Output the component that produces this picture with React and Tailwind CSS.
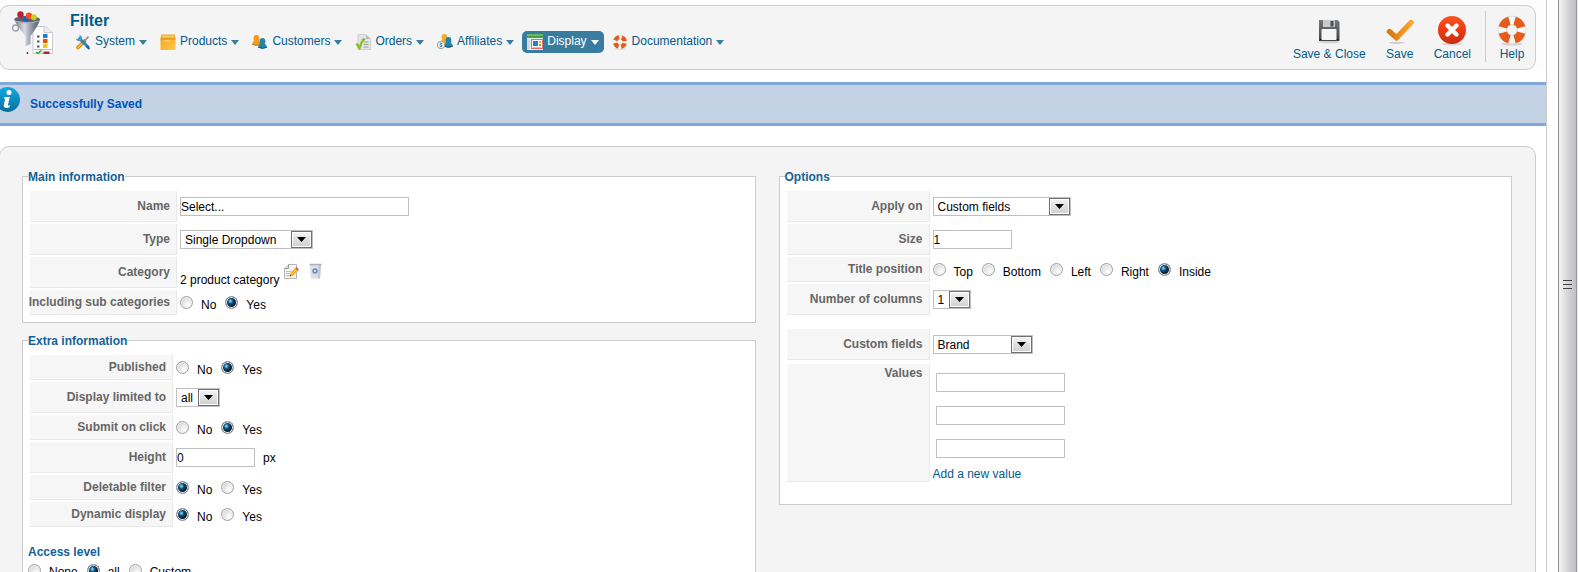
import React, { useId } from "react";

/* ---------- icons ---------- */

function FunnelIcon() {
  return (
    <svg width="42" height="43" viewBox="0 0 42 43" aria-hidden="true">
      <defs>
        <linearGradient id="funnel" x1="0" x2="1">
          <stop offset="0" stopColor="#6f7180" />
          <stop offset=".4" stopColor="#d9dbe4" />
          <stop offset=".7" stopColor="#8e91a0" />
          <stop offset="1" stopColor="#4e505e" />
        </linearGradient>
      </defs>
      <path d="M21 18.500L24 15.500H33.500L40.500 21.500V42.500H21Z" fill="#fff" stroke="#c9c9cf" />
      <path d="M32 15.500V21.500H40.500" fill="#ececf0" stroke="#c9c9cf" />
      <path d="M25 25.500h2.500M25 30.500h2.500M25 35.500h2.500" stroke="#555" strokeWidth="2" />
      <rect x="31" y="23" width="4.500" height="4" fill="#1a7fd0" />
      <rect x="31" y="28" width="4.500" height="4" fill="#f04a12" />
      <rect x="31" y="33" width="4.500" height="4" fill="#e6cf1b" />
      <path d="M22 38.500h8v4M30 38.500h10" stroke="#b9b9c0" fill="none" />
      <path d="M24 41l2 1.500 3-3" stroke="#3ba32e" strokeWidth="1.500" fill="none" />
      <rect x="31.500" y="40.500" width="6" height="2.500" fill="#b3202a" />
      <circle cx="3.500" cy="17" r="3" fill="none" stroke="#9a9ba8" strokeWidth="1.300" />
      <path d="M2 8Q15 3 28 8Q27 14 18.500 25V33L13.500 35.500V25Q4 14 2 8Z" fill="url(#funnel)" />
      <ellipse cx="15" cy="8" rx="12.500" ry="3" fill="#5d5f6e" />
      <circle cx="8.500" cy="3.500" r="3.200" fill="#b5222f" />
      <circle cx="14" cy="8" r="3" fill="#1b63b8" />
      <circle cx="17" cy="4.800" r="3.200" fill="#f4511e" />
      <circle cx="21.800" cy="6.200" r="3" fill="#c8cf1a" />
      <path d="M3 10Q15 14 27 10" stroke="#a9acb8" fill="none" />
      <path d="M15.500 41v2" stroke="#b3202a" strokeWidth="1.500" />
    </svg>
  );
}

function ToolsIcon() {
  return (
    <svg width="16" height="16" viewBox="0 0 16 16" aria-hidden="true">
      <path d="M3 13.500L9.500 7" stroke="#d9861a" strokeWidth="3.600" strokeLinecap="round" />
      <path d="M3 13.500L8.500 8" stroke="#f9bd45" strokeWidth="1.600" strokeLinecap="round" />
      <path d="M9.500 7L13.500 2.500" stroke="#8f9499" strokeWidth="1.800" />
      <path d="M4.500 4.500L13 13" stroke="#2b84b8" strokeWidth="3" strokeLinecap="round" />
      <path d="M1 4.500Q1.500 7.500 5 7.200L7.200 5Q7.500 1.800 4.300 1L4.800 3.800 3.600 4.900Z" fill="#4c9ecb" />
      <path d="M11.500 12L14.500 15" stroke="#1c638f" strokeWidth="2" />
    </svg>
  );
}

function BoxIcon() {
  return (
    <svg width="16" height="16" viewBox="0 0 16 16" aria-hidden="true">
      <defs>
        <linearGradient id="box" x1="0" y1="0" x2="1" y2="1">
          <stop offset="0" stopColor="#f7a41d" />
          <stop offset="1" stopColor="#fcca4d" />
        </linearGradient>
      </defs>
      <path d="M1.500 .5h13.500l.500 4.500H.5Z" fill="#eaa41e" />
      <path d="M2.500 1.500h12v2h-12.500Z" fill="#f8cf66" />
      <rect x=".5" y="4.500" width="15" height="11.500" fill="url(#box)" />
      <path d="M.5 5h15" stroke="#e0960f" />
      <rect x="4" y="6" width="6" height="1.500" fill="#fbd27a" />
    </svg>
  );
}

function Person({ x, y, color, dark }) {
  return (
    <g transform={`translate(${x} ${y})`}>
      <ellipse cx="4.500" cy="3.400" rx="2.900" ry="3.400" fill={color} />
      <path d="M0 9.500Q.2 6.500 3 5.200h3Q8.900 6.500 9 9.500Q4.500 11.800 0 9.500Z" fill={color} />
      <path d="M.2 9.200Q4.500 11.400 8.900 9.200" stroke={dark} fill="none" />
    </g>
  );
}

function CustomersIcon() {
  return (
    <svg width="16" height="16" viewBox="0 0 16 16" aria-hidden="true">
      <Person x="0" y="1" color="#f39a21" dark="#cf7310" />
      <Person x="6" y="4" color="#2583a8" dark="#14566f" />
    </svg>
  );
}

function OrdersIcon() {
  return (
    <svg width="16" height="16" viewBox="0 0 16 16" aria-hidden="true">
      <path d="M3 .5h8L15.500 5v10.500H3Z" fill="#e4e5e6" stroke="#cfd0d2" />
      <path d="M11 .5L15.500 5H11Z" fill="#b9bbbd" />
      <path d="M6.500 5.500h4M8.500 8h5M8.500 10.500h5M8.500 13h5" stroke="#9fa1a3" />
      <path d="M1.500 9.500L4.500 14Q6 8 9.500 4.500" stroke="#8cbf26" strokeWidth="2.400" fill="none" />
    </svg>
  );
}

function AffiliatesIcon() {
  return (
    <svg width="16" height="16" viewBox="0 0 16 16" aria-hidden="true">
      <Person x="3" y="0" color="#f5ac25" dark="#cf8310" />
      <Person x="7" y="3" color="#2583a8" dark="#14566f" />
      <circle cx="4" cy="11" r="3.700" fill="#f0f4f6" stroke="#8ba6b1" />
      <path d="M5.200 9.500Q3 8.600 3 10Q3 11 4.200 11Q5.400 11.200 5 12.300Q4 13.200 2.700 12.300" stroke="#42606c" strokeWidth=".9" fill="none" />
    </svg>
  );
}

function DisplayIcon() {
  return (
    <svg width="16" height="16" viewBox="0 0 16 16" aria-hidden="true">
      <rect width="16" height="16" fill="#e9f1f3" />
      <rect width="16" height="4" fill="#45a048" />
      <path d="M0 1h16" stroke="#8ad08b" />
      <rect x="0" y="5" width="3" height="10" fill="#cfdbe0" />
      <rect x="4.500" y="5.500" width="11" height="9" fill="#fff" stroke="#e06a67" />
      <rect x="6" y="7" width="5" height="5" fill="#1f86b5" />
      <rect x="12" y="7" width="2" height="2" fill="#f0a93b" />
      <rect x="12" y="10" width="2" height="2" fill="#79b643" />
      <path d="M6 13.500h8" stroke="#e6b3b1" />
    </svg>
  );
}

function LifebuoyIcon({ size }) {
  return (
    <svg width={size} height={size} viewBox="0 0 32 32" aria-hidden="true">
      <ellipse cx="16" cy="30" rx="11" ry="1.600" fill="#d6d6d6" />
      <circle cx="16" cy="16" r="9.600" fill="none" stroke="#d3d3d3" strokeWidth="9.400" />
      <circle cx="16" cy="16" r="9.600" fill="none" stroke="#f9f9f9" strokeWidth="8" />
      <circle
        cx="16"
        cy="16"
        r="9.600"
        fill="none"
        stroke="#e65b1c"
        strokeWidth="8.400"
        pathLength="80"
        strokeDasharray="13 7"
        strokeDashoffset="-3.500"
      />
    </svg>
  );
}

function FloppyIcon() {
  return (
    <svg width="32" height="32" viewBox="0 0 32 32" aria-hidden="true">
      <defs>
        <linearGradient id="floppy" x1="0" y1="0" x2="0" y2="1">
          <stop offset="0" stopColor="#77787a" />
          <stop offset="1" stopColor="#414244" />
        </linearGradient>
      </defs>
      <ellipse cx="16" cy="28" rx="11" ry="1.300" fill="#d2d2d2" />
      <path d="M6 6h18.500L26.500 8v19H6Z" fill="url(#floppy)" />
      <rect x="10" y="6" width="12" height="7" fill="#c9cacc" />
      <rect x="17.500" y="7" width="3" height="5.500" fill="#4c4d50" />
      <rect x="8.500" y="15" width="15" height="11" rx="1" fill="#f5f5f6" />
      <path d="M7 25.500h1M24.500 25.500h1" stroke="#111" />
    </svg>
  );
}

function CheckIcon() {
  return (
    <svg width="32" height="32" viewBox="0 0 32 32" aria-hidden="true">
      <defs>
        <linearGradient id="check" x1="0" x2="1">
          <stop offset="0" stopColor="#d87a10" />
          <stop offset="1" stopColor="#fba62f" />
        </linearGradient>
      </defs>
      <ellipse cx="13" cy="28.800" rx="8" ry="1.100" fill="#cfcfcf" />
      <path d="M5.500 17.500L12.500 23.800L27 8.500" fill="none" stroke="url(#check)" strokeWidth="5.400" strokeLinecap="round" strokeLinejoin="round" />
    </svg>
  );
}

function CancelIcon() {
  return (
    <svg width="32" height="32" viewBox="0 0 32 32" aria-hidden="true">
      <defs>
        <linearGradient id="cancel" x1="0" y1="0" x2="0" y2="1">
          <stop offset="0" stopColor="#fb5423" />
          <stop offset=".5" stopColor="#ee3a12" />
          <stop offset="1" stopColor="#c42f12" />
        </linearGradient>
      </defs>
      <ellipse cx="16" cy="30" rx="11" ry="1.400" fill="#d6d6d6" />
      <circle cx="16" cy="16" r="14" fill="url(#cancel)" />
      <path d="M11.500 11.500l9 9M20.500 11.500l-9 9" stroke="#fff" strokeWidth="4.400" strokeLinecap="round" />
    </svg>
  );
}

function InfoIcon() {
  return (
    <svg width="25" height="25" viewBox="0 0 25 25" aria-hidden="true">
      <defs>
        <linearGradient id="info" x1="0" y1="0" x2="0" y2="1">
          <stop offset="0" stopColor="#12a9e6" />
          <stop offset="1" stopColor="#066f9c" />
        </linearGradient>
      </defs>
      <circle cx="12.500" cy="12.500" r="12.500" fill="url(#info)" />
      <circle cx="14" cy="5.500" r="2.500" fill="#fff" />
      <path d="M9.500 10h5.300l-2 8.500h2.200l-.4 1.800q-5.600 1.600-6-1.200l1.600-7.300H9Z" fill="#fff" />
    </svg>
  );
}

function EditIcon() {
  return (
    <svg width="16" height="16" viewBox="0 0 16 16" aria-hidden="true">
      <path d="M1.500 5.500L5.500 1.500H13.500V15.500H1.500Z" fill="#f5f5f5" stroke="#b4b4b4" />
      <path d="M1.500 5.500H5.500V1.500" fill="#ddd" stroke="#9c9c9c" />
      <path d="M3 8.500h6M3 10.500h4M3 12.500h3" stroke="#b9c0c6" />
      <path d="M6.500 13.500L7.500 10L12.500 5L15.300 7.600L10 12.700Z" fill="#f9a91d" />
      <path d="M8.500 11.500L13.500 6.500" stroke="#fdd768" />
      <path d="M12.200 5.200L13.500 4L16 6.500L14.800 7.800Z" fill="#e35247" />
      <path d="M6.500 13.500l.5-1.700 1.300 1.200Z" fill="#333" />
    </svg>
  );
}

function TrashIcon() {
  return (
    <svg width="16" height="16" viewBox="0 0 16 16" aria-hidden="true">
      <path d="M3 2h11l-1 13.500H4Z" fill="#dcdee2" />
      <path d="M11.500 2h2.500l-1 13.500H11Z" fill="#c3c5cb" />
      <path d="M2.500 1.500h12" stroke="#b0b2b8" strokeWidth="1.500" />
      <circle cx="8" cy="8" r="1.900" fill="none" stroke="#5f86d0" strokeWidth="1.500" />
    </svg>
  );
}

function Caret() {
  return (
    <svg width="8" height="5" viewBox="0 0 8 5" className="fill-current" aria-hidden="true">
      <path d="M0 0H8L4 5Z" />
    </svg>
  );
}

/* ---------- form parts ---------- */

function TextBox({ className, ...props }) {
  return <input type="text" className={`h-[19px] border border-[#c0c0c0] bg-white text-black ${className}`} {...props} />;
}

function DropDown({ id, options, className }) {
  return (
    <span className={`relative inline-flex h-[19px] border border-[#c0c0c0] bg-white ${className}`}>
      <select id={id} className="w-full appearance-none bg-transparent pl-1 pr-[22px] leading-4 text-black">
        {options.map((o) => (
          <option key={o}>{o}</option>
        ))}
      </select>
      <span className="pointer-events-none absolute inset-y-0 right-0 flex w-[21px] items-center justify-center border border-[#707070] bg-linear-to-b from-[#f4f4f4] to-[#cfcfcf] text-black shadow-[inset_0_0_0_1px_#fff]">
        <svg width="9" height="5" viewBox="0 0 9 5" aria-hidden="true">
          <path d="M0 0H9L4.500 5Z" />
        </svg>
      </span>
    </span>
  );
}

function Radios({ name, options, value, labelledBy }) {
  return (
    <div role="radiogroup" aria-labelledby={labelledBy} className="flex gap-[9px]">
      {options.map((o) => (
        <label key={o} className="flex items-center gap-2 text-black">
          <input
            type="radio"
            name={name}
            defaultChecked={o === value}
            className="size-[13px] appearance-none rounded-full border border-[#a0a0a0] bg-radial-[at_65%_70%] from-white to-[#c4c8cc] shadow-[inset_0_0_0_1px_#f4f4f4] checked:border-[#858b91] checked:bg-radial-[at_40%_38%] checked:from-[#7fd0f0] checked:from-5% checked:via-[#12557f] checked:via-25% checked:to-[#04182b] checked:to-55% checked:shadow-[inset_0_0_0_1px_#e8ebed]"
          />
          <span className="mt-1">{o}</span>
        </label>
      ))}
    </div>
  );
}

function RadioRow({ label, labelWidth, ...rest }) {
  const id = useId();
  return (
    <div className="flex gap-[3px]">
      <span id={id} className={`${cell} ${labelWidth} min-h-[25px] items-center`}>
        {label}
      </span>
      <div className="flex items-center">
        <Radios labelledBy={id} name={label} {...rest} />
      </div>
    </div>
  );
}

const cell =
  "flex shrink-0 justify-end border-r border-b border-[#e9e9e9] bg-[#f6f6f6] pr-1.5 font-bold text-[#666] whitespace-nowrap";

function Row({ label, labelWidth, htmlFor, children }) {
  return (
    <div className="flex gap-[3px]">
      <label htmlFor={htmlFor} className={`${cell} ${labelWidth} min-h-[31px] items-center`}>
        {label}
      </label>
      <div className="flex items-center">{children}</div>
    </div>
  );
}

function Panel({ title, className, children }) {
  return (
    <fieldset className={`min-w-0 border border-[#ccc] bg-white px-[5px] pt-1.5 ${className}`}>
      <legend className="h-[18px] pt-0.5 font-bold leading-4 text-[#146295]">{title}</legend>
      {children}
    </fieldset>
  );
}

/* ---------- page ---------- */

const menu = [
  { label: "System", icon: <ToolsIcon /> },
  { label: "Products", icon: <BoxIcon /> },
  { label: "Customers", icon: <CustomersIcon /> },
  { label: "Orders", icon: <OrdersIcon /> },
  { label: "Affiliates", icon: <AffiliatesIcon /> },
  { label: "Display", icon: <DisplayIcon />, active: true },
  { label: "Documentation", icon: <LifebuoyIcon size={16} /> },
];

function ToolButton({ icon, label }) {
  return (
    <button type="button" className="flex min-w-8 flex-col items-center whitespace-nowrap leading-4">
      {icon}
      {label}
    </button>
  );
}

function Header() {
  return (
    <header className="bg-[#fcfcfc] pt-[5px] pr-[10px]">
      <div className="-ml-px flex min-h-[65px] justify-between rounded-[10px] border border-[#ccc] bg-[#f4f4f4] pr-[7px] pl-3 text-[#025a8d]">
        <div className="flex gap-4 pt-[5px]">
          <FunnelIcon />
          <div>
            <h1 className="text-base leading-5 font-bold">Filter</h1>
            <nav className="flex gap-[3px]">
              {menu.map((m) => (
                <a
                  key={m.label}
                  href="#"
                  className={`flex h-[22px] items-center gap-1 rounded-[5px] px-[5px] whitespace-nowrap ${m.active ? "bg-[#387c9f] text-white" : ""}`}
                >
                  {m.icon}
                  <span className="pb-0.5">{m.label}</span>
                  <span className={m.active ? "text-white" : "text-[#387c9f]"}>
                    <Caret />
                  </span>
                </a>
              ))}
            </nav>
          </div>
        </div>
        <div className="flex pt-[5px] pb-[7px]">
          <div className="flex items-start gap-[18px] border-r border-[#ccc] pt-[3px] pr-[14px]">
            <ToolButton icon={<FloppyIcon />} label="Save & Close" />
            <ToolButton icon={<CheckIcon />} label="Save" />
            <ToolButton icon={<CancelIcon />} label="Cancel" />
          </div>
          <div className="pt-[3px] pl-[10px]">
            <ToolButton icon={<LifebuoyIcon size={32} />} label="Help" />
          </div>
        </div>
      </div>
    </header>
  );
}

function Message() {
  return (
    <div role="status" className="mt-3 flex min-h-11 items-start gap-[10px] border-y-[3px] border-[#84a7db] bg-[#c3d2e5] font-bold text-[#05b]">
      <span className="-ml-[5px] pt-0.5">
        <InfoIcon />
      </span>
      <span className="pt-[11px] leading-4">Successfully Saved</span>
    </div>
  );
}

function MainInformation() {
  const w = "w-[147px]";
  return (
    <Panel title="Main information" className="pb-[7px]">
      <div className="ml-0.5 flex flex-col gap-0.5">
        <Row label="Name" labelWidth={w} htmlFor="name">
          <TextBox id="name" defaultValue="Select..." className="w-[229px]" />
        </Row>
        <Row label="Type" labelWidth={w} htmlFor="type">
          <DropDown id="type" options={["Single Dropdown"]} className="w-[133px]" />
        </Row>
        <Row label="Category" labelWidth={w}>
          <span className="flex items-start gap-1 text-black">
            <span className="pt-3.5 leading-4">2 product category</span>
            <span className="flex gap-2 pt-[5px]">
              <button type="button" aria-label="Edit">
                <EditIcon />
              </button>
              <button type="button" aria-label="Delete">
                <TrashIcon />
              </button>
            </span>
          </span>
        </Row>
        <RadioRow label="Including sub categories" labelWidth={w} options={["No", "Yes"]} value="Yes" />
      </div>
    </Panel>
  );
}

function ExtraInformation() {
  const w = "w-[143px]";
  return (
    <Panel title="Extra information" className="mt-2 pb-4">
      <div className="ml-0.5 flex flex-col gap-0.5">
        <RadioRow label="Published" labelWidth={w} options={["No", "Yes"]} value="Yes" />
        <Row label="Display limited to" labelWidth={w} htmlFor="limit">
          <DropDown id="limit" options={["all"]} className="w-11" />
        </Row>
        <RadioRow label="Submit on click" labelWidth={w} options={["No", "Yes"]} value="Yes" />
        <Row label="Height" labelWidth={w} htmlFor="height">
          <TextBox id="height" defaultValue="0" className="w-[79px]" />
          <span className="pl-2 text-black">px</span>
        </Row>
        <RadioRow label="Deletable filter" labelWidth={w} options={["No", "Yes"]} value="No" />
        <RadioRow label="Dynamic display" labelWidth={w} options={["No", "Yes"]} value="No" />
      </div>
      <h2 id="access" className="mt-[17px] leading-4 font-bold text-[#146295]">
        Access level
      </h2>
      <Radios name="access" labelledBy="access" options={["None", "all", "Custom"]} value="all" />
    </Panel>
  );
}

function Options() {
  const w = "w-[143px]";
  return (
    <Panel title="Options" className="self-start pb-[22px]">
      <div className="ml-0.5 flex flex-col gap-0.5">
        <Row label="Apply on" labelWidth={w} htmlFor="apply">
          <DropDown id="apply" options={["Custom fields"]} className="w-[138px]" />
        </Row>
        <Row label="Size" labelWidth={w} htmlFor="size">
          <TextBox id="size" defaultValue="1" className="w-[79px]" />
        </Row>
        <RadioRow label="Title position" labelWidth={w} options={["Top", "Bottom", "Left", "Right", "Inside"]} value="Inside" />
        <Row label="Number of columns" labelWidth={w} htmlFor="columns">
          <DropDown id="columns" options={["1"]} className="w-[38px]" />
        </Row>
      </div>
      <div className="mt-3.5 ml-0.5 flex flex-col gap-1">
        <Row label="Custom fields" labelWidth={w} htmlFor="fields">
          <DropDown id="fields" options={["Brand"]} className="w-[100px]" />
        </Row>
        <div className="flex gap-[3px]">
          <span id="values" className={`${cell} ${w} pt-px`}>
            Values
          </span>
          <div className="flex flex-col items-start pt-[9px]">
            <div className="flex flex-col gap-3.5 pl-[3px]">
              <TextBox aria-labelledby="values" className="w-[129px]" />
              <TextBox aria-labelledby="values" className="w-[129px]" />
              <TextBox aria-labelledby="values" className="w-[129px]" />
            </div>
            <a href="#" className="mt-2 leading-4 text-[#025a8d]">
              Add a new value
            </a>
          </div>
        </div>
      </div>
    </Panel>
  );
}

function Splitter() {
  return (
    <div className="flex w-8 shrink-0 border-l border-[#ccc] bg-white pl-[11px]">
      <div
        role="separator"
        aria-orientation="vertical"
        className="flex w-[19px] items-center justify-center border-x border-l-[#909090] border-r-[#98979c] bg-linear-to-r from-[#f4f4f4] via-[#d9dadc] via-45% to-[#bfbec4]"
      >
        <div className="flex flex-col gap-[3px] pb-1">
          <span className="h-px w-[9px] bg-[#444]" />
          <span className="h-px w-[9px] bg-[#444]" />
          <span className="h-px w-[9px] bg-[#444]" />
        </div>
      </div>
      <div className="flex-1 bg-[#ececee]" />
    </div>
  );
}

export default function App() {
  return (
    <div className="flex h-screen bg-white font-['Liberation_Sans',Arial,sans-serif] text-xs">
      <div className="min-w-0 flex-1 overflow-x-hidden overflow-y-auto [scrollbar-width:none]">
        <Header />
        <Message />
        <main className="mt-5 mr-[10px] -ml-px grid grid-cols-2 gap-[23px] rounded-[10px] border border-[#ccc] bg-[#f4f4f4] pt-5 pr-[23px] pb-5 pl-[22px]">
          <div className="min-w-0">
            <MainInformation />
            <ExtraInformation />
          </div>
          <Options />
        </main>
      </div>
      <Splitter />
    </div>
  );
}
